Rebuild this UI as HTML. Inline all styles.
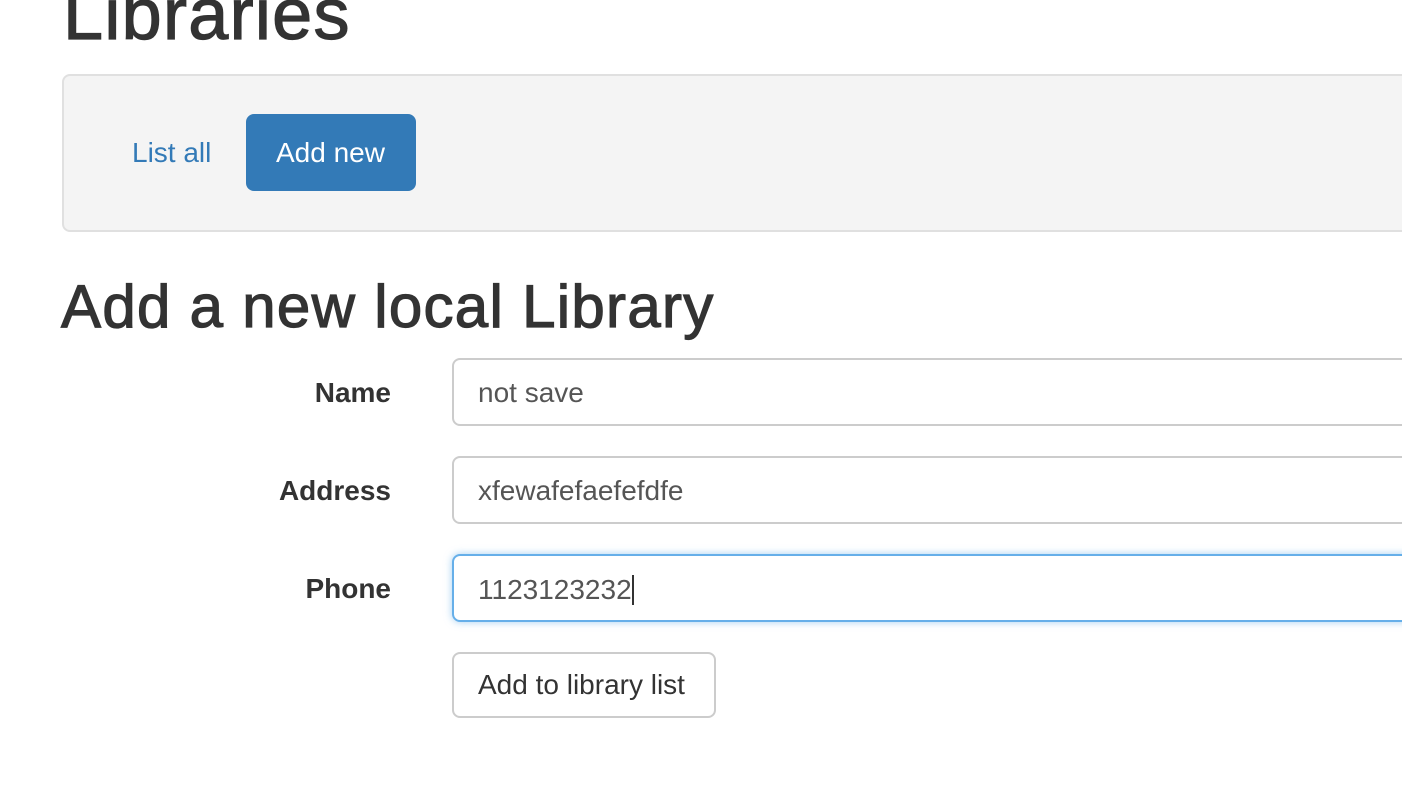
<!DOCTYPE html>
<html><head><meta charset="utf-8"><style>
body{margin:0;width:1402px;height:786px;overflow:hidden;background:#fff;font-family:"Liberation Sans",Arial,sans-serif;color:#333;position:relative}
.a{position:absolute;white-space:nowrap}
.nav{position:absolute;left:62px;top:74px;width:1400px;height:154px;background:#f4f4f4;border:2px solid #e0e0e0;border-radius:8px}
.btn{position:absolute;border-radius:8px;box-sizing:border-box}
.in{position:absolute;left:452px;width:1000px;height:68px;border:2px solid #ccc;border-radius:8px;box-sizing:border-box;background:#fff}
.lab{position:absolute;right:1011px;font-size:28px;line-height:28px;font-weight:bold;color:#333}
.val{position:absolute;left:478px;font-size:28px;line-height:28px;color:#555}
.h{-webkit-text-stroke:1.2px #333}
</style></head><body>
<div class="a h" style="left:63px;top:-21px;font-size:72px;line-height:72px;letter-spacing:1.3px">Libraries</div>
<div class="nav"></div>
<div class="a" style="left:132px;top:139px;font-size:28px;line-height:28px;color:#337ab7">List all</div>
<div class="btn" style="left:246px;top:114px;width:170px;height:77px;background:#337ab7"></div>
<div class="a" style="left:276px;top:139px;font-size:28px;line-height:28px;color:#fff">Add new</div>
<div class="a h" style="left:61px;top:277px;font-size:60px;line-height:60px;letter-spacing:1.3px">Add a new local Library</div>
<div class="lab" style="top:379px">Name</div>
<div class="in" style="top:358px"></div>
<div class="val" style="top:379px">not save</div>
<div class="lab" style="top:477px">Address</div>
<div class="in" style="top:456px"></div>
<div class="val" style="top:477px">xfewafefaefefdfe</div>
<div class="lab" style="top:575px">Phone</div>
<div class="in" style="top:554px;border-color:#66afe9;box-shadow:0 0 8px rgba(102,175,233,.6)"></div>
<div class="val" style="top:575px">1123123232<span style="display:inline-block;width:2px;height:30px;background:#333;vertical-align:-6px"></span></div>
<div class="btn" style="left:452px;top:652px;width:264px;height:66px;border:2px solid #ccc;background:#fff"></div>
<div class="a" style="left:478px;top:671px;font-size:28px;line-height:28px;color:#333">Add to library list</div>
</body></html>
